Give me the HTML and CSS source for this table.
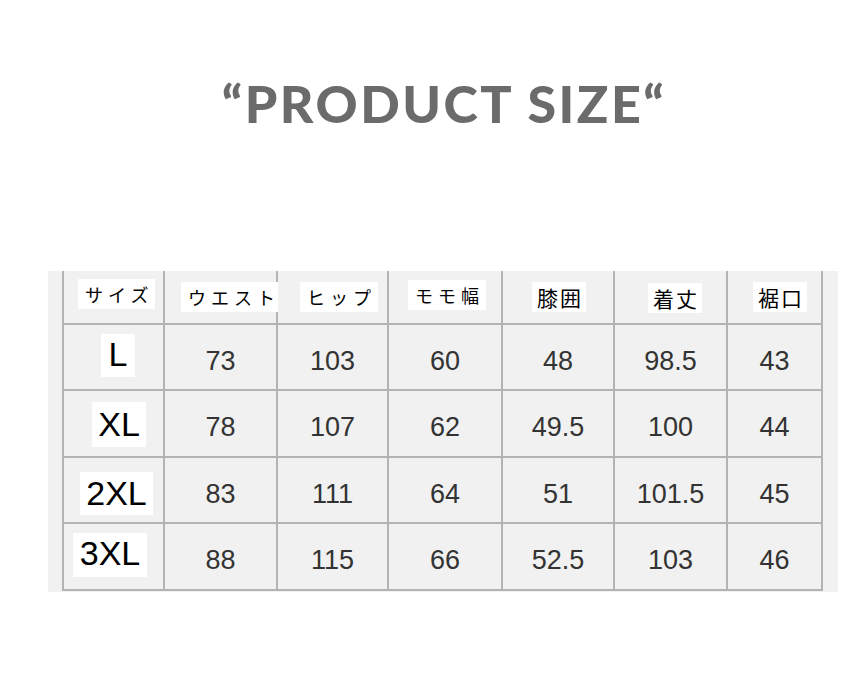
FILE: index.html
```html
<!DOCTYPE html>
<html lang="ja">
<head>
<meta charset="utf-8">
<title>PRODUCT SIZE</title>
<link rel="stylesheet" href="styles.css">
</head>
<body>
<h1 class="title">“PRODUCT SIZE“</h1>
<div class="panel">
  <div class="grid">
    <div class="hcell h1c"><span class="hlabel kana">サイズ</span></div>
    <div class="hcell h2c"><span class="hlabel kana">ウエスト</span></div>
    <div class="hcell h3c"><span class="hlabel kana">ヒップ</span></div>
    <div class="hcell h4c"><span class="hlabel kana">モモ幅</span></div>
    <div class="hcell h5c"><span class="hlabel kanji">膝囲</span></div>
    <div class="hcell h6c"><span class="hlabel kanji">着丈</span></div>
    <div class="hcell h7c"><span class="hlabel kanji">裾口</span></div>

    <div class="scell s1"><span class="slabel">L</span></div>
    <div class="cell">73</div><div class="cell">103</div><div class="cell">60</div><div class="cell">48</div><div class="cell">98.5</div><div class="cell">43</div>

    <div class="scell s2"><span class="slabel">XL</span></div>
    <div class="cell">78</div><div class="cell">107</div><div class="cell">62</div><div class="cell">49.5</div><div class="cell">100</div><div class="cell">44</div>

    <div class="scell s3"><span class="slabel">2XL</span></div>
    <div class="cell">83</div><div class="cell">111</div><div class="cell">64</div><div class="cell">51</div><div class="cell">101.5</div><div class="cell">45</div>

    <div class="scell s4"><span class="slabel">3XL</span></div>
    <div class="cell">88</div><div class="cell">115</div><div class="cell">66</div><div class="cell">52.5</div><div class="cell">103</div><div class="cell">46</div>
  </div>
</div>
</body>
</html>
```
FILE: styles.css
```css
html, body {
  margin: 0;
  padding: 0;
  background: #ffffff;
}
body {
  width: 852px;
  height: 692px;
  overflow: hidden;
}
.title {
  margin: 0;
  padding: 73px 0 0 36px;
  height: 62px;
  line-height: 60px;
  text-align: center;
  font-family: "Lato", "Liberation Sans", sans-serif;
  font-weight: 900;
  font-size: 52px;
  color: #6b6b6b;
  letter-spacing: 2.5px;
}
.panel {
  margin-top: 136px;
  margin-left: 48px;
  width: 761px;
  padding: 0 15px 1px 14px;
  background: #f1f1f1;
}
.grid {
  display: grid;
  grid-template-columns: 99px 111px 109px 112px 110px 111px 93px;
  grid-template-rows: 52px 64px 65px 64px 65px;
  gap: 2px;
  padding: 0 2px 2px 2px;
  background: #b3b3b3;
}
.hcell, .scell, .cell {
  background: #f1f1f1;
  display: flex;
}
.hcell {
  align-items: flex-start;
  justify-content: flex-start;
}
.hlabel {
  display: inline-block;
  background: #ffffff;
  height: 30px;
  line-height: 30px;
  color: #000;
  font-family: "Noto Sans CJK JP", "Noto Sans", sans-serif;
  white-space: nowrap;
}
.kana {
  font-size: 18px;
  letter-spacing: 5px;
  padding: 0 2px 0 7px;
}
.kanji {
  font-size: 21px;
  letter-spacing: 2px;
  padding: 0 3px 0 5px;
}
.h1c { padding: 8px 0 0 14px; }
.h2c { padding: 11px 0 0 16px; }
.h3c { padding: 11px 0 0 22px; }
.h4c { padding: 9px 0 0 19px; }
.h5c { padding: 11px 0 0 29px; }
.h6c { padding: 12px 0 0 33px; }
.h7c { padding: 11px 0 0 25px; }

.scell {
  align-items: flex-start;
}
.slabel {
  display: inline-block;
  background: #ffffff;
  color: #000;
  font-family: "Liberation Sans", Arial, sans-serif;
  font-size: 34px;
  height: 44px;
  line-height: 44px;
  text-align: center;
}
.s1 { padding: 9px 0 0 37px; }
.s1 .slabel { width: 34px; height: 43px; line-height: 41px; }
.s2 { padding: 11px 0 0 28px; }
.s2 .slabel { width: 54px; height: 45px; line-height: 45px; }
.s3 { padding: 14px 0 0 16px; }
.s3 .slabel { width: 73px; height: 43px; line-height: 43px; }
.s4 { padding: 9px 0 0 9px; }
.s4 .slabel { width: 74px; height: 44px; line-height: 40px; }

.cell {
  align-items: center;
  justify-content: center;
  padding-top: 8px;
  box-sizing: border-box;
  font-family: "Liberation Sans", Arial, sans-serif;
  font-size: 27px;
  color: #333333;
}
```
